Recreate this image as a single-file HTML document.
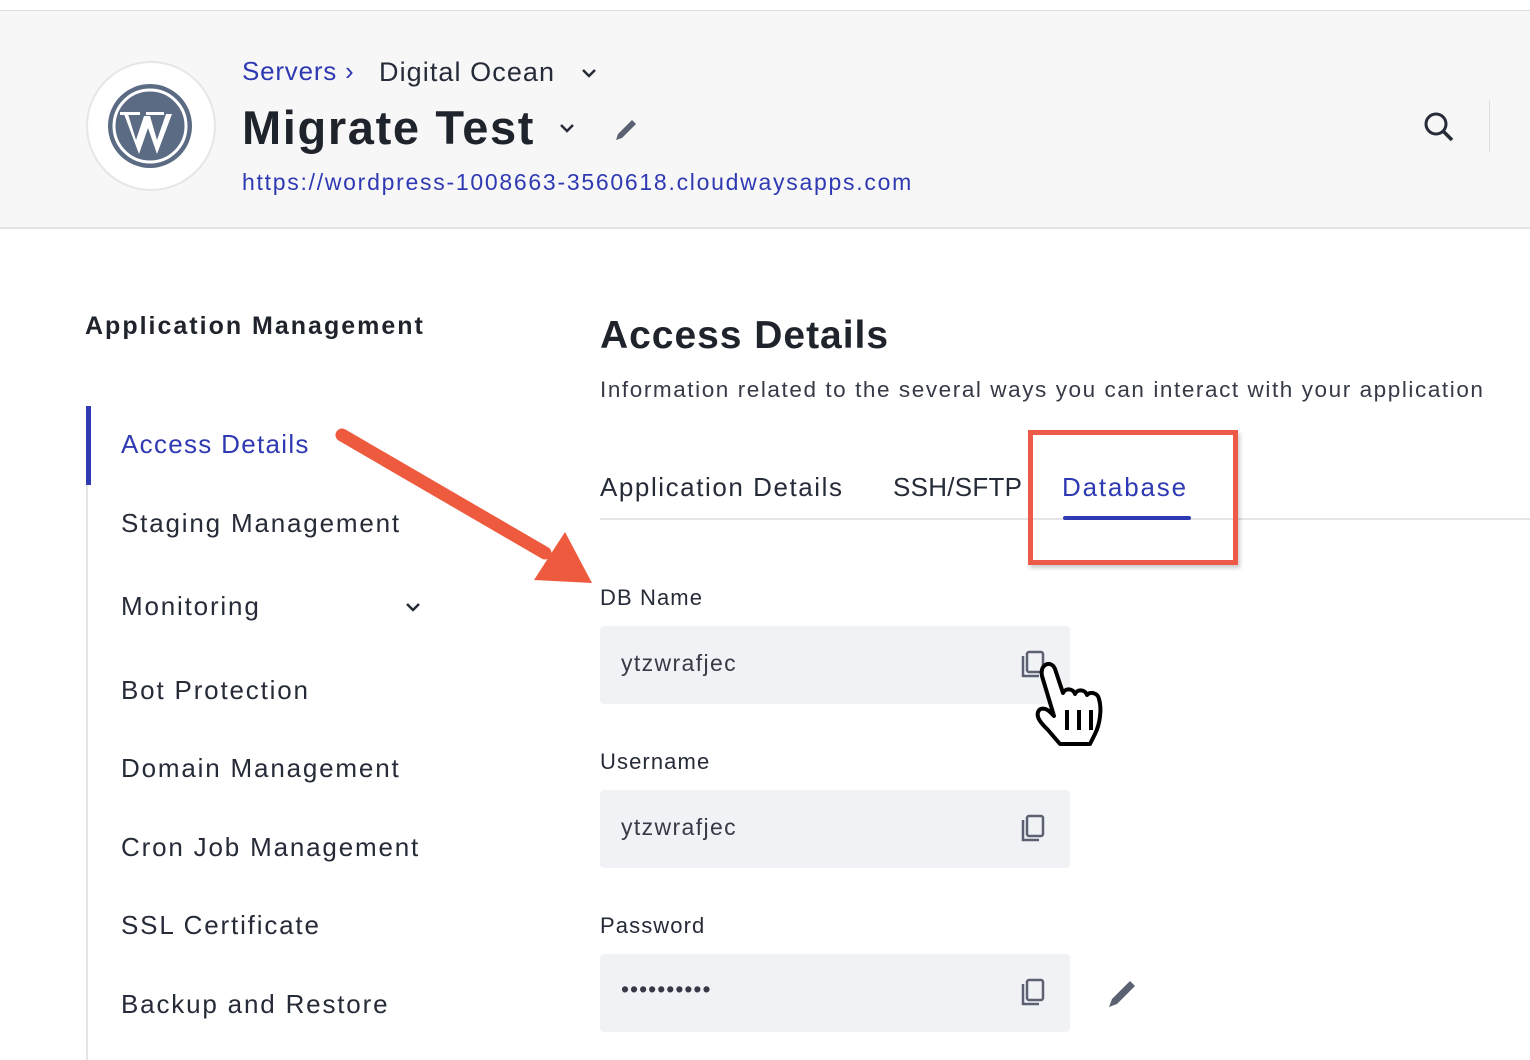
<!DOCTYPE html>
<html><head><style>
*{margin:0;padding:0;box-sizing:border-box}
body{width:1530px;height:1060px;overflow:hidden;background:#fff;font-family:"Liberation Sans",sans-serif;color:#262b38;position:relative}
.a{position:absolute;white-space:nowrap;letter-spacing:0.07em}
.hdr{position:absolute;left:0;top:10px;width:1530px;height:219px;background:#f7f7f8;border-top:1px solid #ddd;border-bottom:2px solid #e2e2e4;letter-spacing:0}
.nav{font-size:26px;color:#262b38}
.lbl{font-size:22px;color:#262b38;letter-spacing:0.05em}
.field{position:absolute;left:600px;width:470px;height:78px;background:#f1f2f5;border-radius:4px}
.field span{position:absolute;left:21px;top:24px;font-size:23px;color:#353a46;letter-spacing:0.06em}
</style></head><body>
<div class="hdr"></div>
<div class="a" style="left:86px;top:61px;width:130px;height:130px;border-radius:50%;background:#fff;border:2px solid #e6e6e8"></div>
<svg class="a" style="left:106px;top:82px" width="88" height="88" viewBox="0 0 88 88">
<circle cx="44" cy="44" r="42" fill="#5b6b84"/><circle cx="44" cy="44" r="36" fill="none" stroke="#fff" stroke-width="3"/>
<path d="M18 32 L33 72 L42 46 L51 72 L66 32 L60 32 L51 58 L44 34 L38 34 L30 58 L22 32 Z" fill="#fff"/>
<path d="M14 30 h20 v3 h-20z M40 30 h18 v3 h-18z" fill="#fff"/>
</svg>
<div class="a" style="left:242px;top:56px;font-size:26px;color:#2f3ab2;letter-spacing:0.03em">Servers ›</div>
<div class="a" style="left:379px;top:57px;font-size:27px;color:#262b38;letter-spacing:0.04em">Digital Ocean</div>
<svg class="a" style="left:580px;top:67px" width="18" height="12"><path d="M3 3 l6 6 l6 -6" stroke="#262b38" stroke-width="2.5" fill="none"/></svg>
<div class="a" style="left:242px;top:100px;font-size:47px;font-weight:bold;color:#1f232b;letter-spacing:0.035em">Migrate Test</div>
<svg class="a" style="left:558px;top:122px" width="18" height="12"><path d="M3 3 l6 6 l6 -6" stroke="#262b38" stroke-width="2.5" fill="none"/></svg>
<svg class="a" style="left:612px;top:116px" width="28" height="28"><path d="M4 24 l2 -6 l14 -14 l4 4 l-14 14 z" fill="#5b6170"/></svg>
<div class="a" style="left:242px;top:169px;font-size:23px;color:#2f3ab2;letter-spacing:0.075em">https://wordpress-1008663-3560618.cloudwaysapps.com</div>
<svg class="a" style="left:1422px;top:110px" width="34" height="34"><circle cx="14" cy="14" r="10" stroke="#262b38" stroke-width="3" fill="none"/><path d="M21 21 l9 9" stroke="#262b38" stroke-width="3.5"/></svg>
<div class="a" style="left:1489px;top:100px;width:1px;height:52px;background:#ddd"></div>

<div class="a" style="left:85px;top:312px;font-size:25px;font-weight:bold;color:#1f232b;letter-spacing:0.08em">Application Management</div>
<div class="a" style="left:86px;top:406px;width:2px;height:654px;background:#e5e5e8"></div>
<div class="a" style="left:86px;top:406px;width:5px;height:79px;background:#2f3ab2"></div>
<div class="a nav" style="left:121px;top:429px;color:#2f3ab2;letter-spacing:0.05em">Access Details</div>
<div class="a nav" style="left:121px;top:508px">Staging Management</div>
<div class="a nav" style="left:121px;top:591px">Monitoring</div>
<svg class="a" style="left:404px;top:601px" width="18" height="12"><path d="M3 3 l6 6 l6 -6" stroke="#262b38" stroke-width="2.5" fill="none"/></svg>
<div class="a nav" style="left:121px;top:675px">Bot Protection</div>
<div class="a nav" style="left:121px;top:753px">Domain Management</div>
<div class="a nav" style="left:121px;top:832px">Cron Job Management</div>
<div class="a nav" style="left:121px;top:910px">SSL Certificate</div>
<div class="a nav" style="left:121px;top:989px">Backup and Restore</div>

<div class="a" style="left:600px;top:314px;font-size:39px;font-weight:bold;color:#1f232b;letter-spacing:0.025em">Access Details</div>
<div class="a" style="left:600px;top:377px;font-size:22.5px;color:#353a46;letter-spacing:0.07em">Information related to the several ways you can interact with your application</div>
<div class="a" style="left:600px;top:472px;font-size:26px;letter-spacing:0.06em">Application Details</div>
<div class="a" style="left:893px;top:472px;font-size:26px;letter-spacing:0.01em">SSH/SFTP</div>
<div class="a" style="left:1062px;top:472px;font-size:26px;color:#2f3ab2">Database</div>
<div class="a" style="left:600px;top:518px;width:930px;height:2px;background:#e5e5e8"></div>
<div class="a" style="left:1063px;top:516px;width:128px;height:4px;background:#2f3ab2;border-radius:2px"></div>
<div class="a" style="left:1028px;top:430px;width:210px;height:135px;border:5px solid #ee5a48;box-shadow:2px 3px 4px rgba(0,0,0,.2)"></div>

<div class="a lbl" style="left:600px;top:585px">DB Name</div>
<div class="field" style="top:626px"><span>ytzwrafjec</span></div>
<div class="a lbl" style="left:600px;top:749px">Username</div>
<div class="field" style="top:790px"><span>ytzwrafjec</span></div>
<div class="a lbl" style="left:600px;top:913px">Password</div>
<div class="field" style="top:954px"><span style="letter-spacing:1px;top:22px">••••••••••</span></div>
<svg class="a" style="left:1020px;top:650px" width="28" height="30"><path d="M3 6 v20 h16" stroke="#5b6170" stroke-width="2.5" fill="none"/><rect x="7" y="2" width="16" height="20" rx="2" stroke="#5b6170" stroke-width="2.5" fill="none"/></svg>
<svg class="a" style="left:1020px;top:814px" width="28" height="30"><path d="M3 6 v20 h16" stroke="#5b6170" stroke-width="2.5" fill="none"/><rect x="7" y="2" width="16" height="20" rx="2" stroke="#5b6170" stroke-width="2.5" fill="none"/></svg>
<svg class="a" style="left:1020px;top:978px" width="28" height="30"><path d="M3 6 v20 h16" stroke="#5b6170" stroke-width="2.5" fill="none"/><rect x="7" y="2" width="16" height="20" rx="2" stroke="#5b6170" stroke-width="2.5" fill="none"/></svg>
<svg class="a" style="left:1106px;top:976px" width="34" height="34"><path d="M3 31 l3 -8 l18 -18 l5 5 l-18 18 z" fill="#5b6170"/></svg>
<svg class="a" style="left:1030px;top:660px" width="84" height="90" viewBox="0 0 84 90">
<path d="M14 6 c4 -4 9 -2 11 3 l8 24 c2 -5 10 -5 12 1 c2 -5 10 -5 12 1 c3 -4 11 -2 12 4 c3 10 1 25 -4 35 l-5 10 h-30 l-12 -14 c-6 -6 -12 -12 -10 -18 c2 -5 8 -4 12 0 l4 4 l-12 -40 c-1 -4 0 -8 2 -10 z" fill="#fff" stroke="#000" stroke-width="4" stroke-linejoin="round"/>
<path d="M37 50 v20 M49 50 v20 M61 50 v20" stroke="#000" stroke-width="4"/>
</svg>
<svg class="a" style="left:330px;top:425px" width="270" height="170" viewBox="0 0 270 170">
<path d="M12 10 L215 128" stroke="#ee5a3e" stroke-width="13" stroke-linecap="round"/>
<path d="M262 158 L204 155 L235 107 Z" fill="#ee5a3e"/>
</svg>
</body></html>
